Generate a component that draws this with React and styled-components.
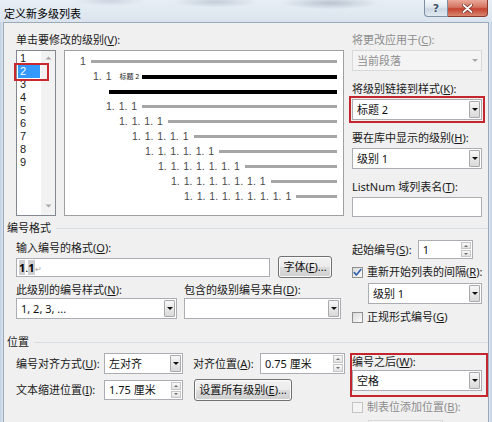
import React from "react";
import styled, { createGlobalStyle } from "styled-components";

const GlobalStyle = createGlobalStyle`
  html, body {
    margin: 0;
    padding: 0;
    background: #dae4ee;
  }
  body {
    font-family: "Noto Sans", "Noto Sans CJK SC", sans-serif;
    font-size: 11px;
    color: #1a1a1a;
  }
`;

const Window = styled.div`
  width: 492px;
  height: 422px;
  overflow: hidden;
  display: flex;
  flex-direction: column;
  background: linear-gradient(
    to right,
    #bfd0e2,
    #dde6ef 3px,
    #dde6ef calc(100% - 3px),
    #bfd0e2
  );
`;

const TitleBar = styled.div`
  flex: none;
  height: 22px;
  display: flex;
  align-items: flex-start;
  background:
    radial-gradient(ellipse 70px 9px at 330px 3px, rgba(105, 120, 138, 0.35), transparent 70%),
    radial-gradient(ellipse 60px 8px at 215px 2px, rgba(115, 130, 148, 0.3), transparent 70%),
    radial-gradient(ellipse 50px 7px at 110px 1px, rgba(125, 140, 158, 0.25), transparent 70%),
    linear-gradient(#e7eef5, #dbe4ee);
`;

const Title = styled.div`
  padding: 6px 0 0 4px;
  font-size: 11px;
  line-height: 16px;
  color: #000;
`;

const CaptionButtons = styled.div`
  margin-left: auto;
  margin-right: 4px;
  display: flex;
`;

const CaptionButton = styled.div`
  width: ${(p) => (p.$close ? 40 : 24)}px;
  height: 17px;
  box-sizing: border-box;
  border: 1px solid ${(p) => (p.$close ? "#8d3b2f" : "#7e8fa4")};
  border-top: none;
  border-left-width: ${(p) => (p.$close ? 0 : 1)}px;
  border-radius: ${(p) => (p.$close ? "0 0 4px 0" : "0 0 0 4px")};
  background: ${(p) =>
    p.$close
      ? "linear-gradient(#eaa99b, #d57461 45%, #c4432f 55%, #d98670)"
      : "linear-gradient(#f4f7fa, #dfe7ef 45%, #cbd6e2 55%, #e1e8f0)"};
  display: flex;
  align-items: center;
  justify-content: center;
  color: #41526a;
  font-family: "DejaVu Sans", sans-serif;
  font-weight: bold;
  font-size: 11px;
  text-shadow: 0 0 2px #fff;
`;

const Client = styled.div`
  flex: 1;
  margin: 0 3px;
  border: 1px solid #9aaabb;
  border-bottom: none;
  background: #f0f0f0;
  display: flex;
  flex-direction: column;
`;

const Section = styled.div`
  display: flex;
  align-items: flex-start;
  padding: ${(p) => p.$pt || 0}px 0 0 12px;
`;

const Column = styled.div`
  flex: none;
  width: ${(p) => p.$w}px;
  margin-left: ${(p) => p.$ml || 0}px;
  margin-top: ${(p) => p.$mt || 0}px;
  display: flex;
  flex-direction: column;
`;

const Label = styled.div`
  font-size: 11px;
  line-height: 14px;
  height: 14px;
  white-space: nowrap;
  color: ${(p) => (p.$disabled ? "#8d8d8d" : "#1a1a1a")};
  padding-left: ${(p) => p.$pl || 0}px;

  u {
    text-underline-offset: 1px;
  }
`;

const Field = styled.div`
  display: flex;
  flex-direction: column;
  gap: 3px;
  margin-bottom: ${(p) => p.$mb ?? 11}px;
`;

const ComboBox = styled.div`
  flex: none;
  display: flex;
  width: ${(p) => (p.$w ? `${p.$w}px` : "auto")};
  height: ${(p) => p.$h || 21}px;
  margin-left: ${(p) => p.$ml || 0}px;
  margin-top: ${(p) => p.$mt || 0}px;
  box-sizing: border-box;
  border: 1px solid ${(p) => (p.$disabled ? "#d9d9d9" : "#abadb3")};
  background: ${(p) => (p.$disabled ? "#f4f4f4" : "#fff")};
  outline: ${(p) => (p.$marked ? "2.5px solid #c3272d" : "none")};
  outline-offset: 1px;
`;

const FieldText = styled.div`
  flex: 1;
  padding-left: 4px;
  font-size: 11px;
  line-height: ${(p) => (p.$lh ? p.$lh : 19)}px;
  white-space: nowrap;
  overflow: hidden;
  color: ${(p) => (p.$disabled ? "#8d8d8d" : "#111")};
`;

const ComboArrow = styled.div`
  flex: none;
  width: 11px;
  margin: 1px;
  box-sizing: border-box;
  border: 1px solid ${(p) => (p.$disabled ? "transparent" : "#a9a9a9")};
  border-radius: 1px;
  background: ${(p) =>
    p.$disabled ? "transparent" : "linear-gradient(#f7f7f7, #d9d9d9)"};
  display: flex;
  align-items: center;
  justify-content: center;

  &::after {
    content: "";
    border-left: 3px solid transparent;
    border-right: 3px solid transparent;
    border-top: 3px solid ${(p) => (p.$disabled ? "#a8a8a8" : "#111")};
  }
`;

const SpinButtons = styled.div`
  flex: none;
  width: 10px;
  margin: 1px;
  display: flex;
  flex-direction: column;
  gap: 1px;
`;

const SpinHalf = styled.div`
  flex: 1;
  box-sizing: border-box;
  border: 1px solid #c6c6c6;
  background: linear-gradient(#f8f8f8, #e2e2e2);
  display: flex;
  align-items: center;
  justify-content: center;

  &::after {
    content: "";
    border-left: 2px solid transparent;
    border-right: 2px solid transparent;
    ${(p) => (p.$up ? "border-bottom" : "border-top")}: 2px solid #6f6f6f;
  }
`;

const LevelList = styled.div`
  position: relative;
  flex: none;
  width: 40px;
  height: 166px;
  box-sizing: border-box;
  border: 1px solid #828790;
  background: #fff;
  display: flex;
`;

const LevelItems = styled.div`
  flex: 1;
  padding-top: 1px;
`;

const LevelItem = styled.div`
  height: 13px;
  line-height: 13px;
  font-family: "Liberation Sans", sans-serif;
  font-size: 11px;
  margin: 0 1px;
  padding-left: 2px;
  background: ${(p) => (p.$selected ? "#3399ff" : "transparent")};
  color: ${(p) => (p.$selected ? "#fff" : "#1a1a1a")};
`;

const ScrollTrack = styled.div`
  flex: none;
  width: 14px;
  background: #f2f2f2;
  display: flex;
  flex-direction: column;
  justify-content: space-between;
  align-items: center;
  padding: 5px 0 7px;
  box-sizing: border-box;
`;

const ListMark = styled.div`
  position: absolute;
  left: -3px;
  top: 12px;
  width: 35px;
  height: 18px;
  box-sizing: border-box;
  border: 2.5px solid #c8282e;
  pointer-events: none;
`;

const Preview = styled.div`
  flex: none;
  width: 280px;
  height: 166px;
  box-sizing: border-box;
  border: 1px solid #a0a0a0;
  background: #fff;
  padding: 3px 6px 0 0;
`;

const PreviewRow = styled.div`
  height: 15px;
  display: flex;
  align-items: center;
  padding-left: ${(p) => p.$indent}px;
`;

const LevelNumber = styled.span`
  font-family: "Liberation Sans", sans-serif;
  font-size: 10.5px;
  line-height: 15px;
  color: #4a4a4a;
  word-spacing: 1px;
  white-space: pre;
`;

const StyleTag = styled.span`
  font-size: 7px;
  line-height: 15px;
  margin-left: 8px;
  color: #222;
  white-space: nowrap;
`;

const Bar = styled.div`
  flex: 1;
  height: ${(p) => (p.$dark ? 4 : 3)}px;
  margin-left: ${(p) => (p.$gap ?? 5)}px;
  background: ${(p) => (p.$dark ? "#000" : "#a6a6a6")};
`;

const SectionHeader = styled.div`
  display: flex;
  align-items: center;
  height: 14px;
  margin-top: ${(p) => p.$mt}px;
  padding-left: 3px;
  font-size: 11px;
  line-height: 14px;

  &::after {
    content: "";
    flex: 1;
    height: 1px;
    margin-left: 5px;
    background: #d8dde2;
  }
`;

const Row = styled.div`
  display: flex;
  align-items: center;
  gap: ${(p) => p.$gap || 0}px;
  margin-top: ${(p) => p.$mt || 0}px;
`;

const LabelPair = styled.div`
  display: grid;
  grid-template-columns: 168px auto;
  margin-top: 5px;
`;

const FormatInput = styled.div`
  flex: none;
  width: 254px;
  height: 19px;
  box-sizing: border-box;
  border: 1px solid #abadb3;
  background: #fff;
  padding-left: 2px;
  font-size: 11px;
  line-height: 17px;
  color: #000;
`;

const Shade = styled.span`
  background: #cfcfcf;
  font-weight: bold;
`;

const ReturnMark = styled.span`
  color: #a0a0a0;
  font-size: 8px;
`;

const PushButton = styled.div`
  flex: none;
  width: ${(p) => p.$w}px;
  height: 22px;
  margin-left: ${(p) => p.$ml || 0}px;
  box-sizing: border-box;
  border: 1px solid #707070;
  border-radius: 3px;
  background: linear-gradient(#f2f2f2, #ebebeb 50%, #dddddd 50%, #cfcfcf);
  box-shadow: inset 0 0 0 1px #fbfbfb;
  font-size: 11px;
  line-height: 20px;
  text-align: center;
  white-space: nowrap;
  color: #111;
`;

const CheckRow = styled.div`
  display: flex;
  align-items: center;
  gap: 4px;
  height: 14px;
  margin-top: ${(p) => p.$mt || 0}px;
`;

const CheckBox = styled.span`
  flex: none;
  width: 11px;
  height: 11px;
  box-sizing: border-box;
  border: 1px solid ${(p) => (p.$disabled ? "#c4c4c4" : "#8f8f8f")};
  background: ${(p) =>
    p.$disabled ? "#f4f4f4" : "linear-gradient(135deg, #dadada, #fbfbfb)"};
  display: flex;
  align-items: center;
  justify-content: center;
`;

const PositionGrid = styled.div`
  display: grid;
  grid-template-columns: 88px 80px 76px 85px;
  row-gap: 5px;
  align-items: center;
  margin-top: 4px;
`;

const WideCell = styled.div`
  grid-column: span 2;
`;

const MarkedGroup = styled.div`
  display: flex;
  flex-direction: column;
  gap: 1px;
  margin-right: -4px;
  padding: 0 4px 4px 0;
  outline: 2.5px solid #c3272d;
`;

const Acc = ({ text, k, colon = true }) => (
  <>
    {text}(<u>{k}</u>){colon ? ":" : ""}
  </>
);

const Combo = ({ value = "", w, h, disabled, marked, ml, mt }) => (
  <ComboBox $w={w} $h={h} $disabled={disabled} $marked={marked} $ml={ml} $mt={mt}>
    <FieldText $disabled={disabled} $lh={(h || 21) - 2}>
      {value}
    </FieldText>
    <ComboArrow $disabled={disabled} />
  </ComboBox>
);

const Spin = ({ value = "", w, h = 20, disabled, ml, mt }) => (
  <ComboBox $w={w} $h={h} $disabled={disabled} $ml={ml} $mt={mt}>
    <FieldText $disabled={disabled} $lh={h - 2}>
      {value}
    </FieldText>
    <SpinButtons>
      <SpinHalf $up />
      <SpinHalf />
    </SpinButtons>
  </ComboBox>
);

const Check = ({ checked, disabled }) => (
  <CheckBox $disabled={disabled}>
    {checked && (
      <svg width="9" height="9" viewBox="0 0 9 9">
        <path
          d="M1.3 4.6 L3.4 7 L7.8 1.6"
          fill="none"
          stroke="#2f5fa8"
          strokeWidth="1.6"
          strokeLinecap="round"
          strokeLinejoin="round"
        />
      </svg>
    )}
  </CheckBox>
);

const ScrollArrow = ({ up }) => (
  <svg width="7" height="4" viewBox="0 0 7 4">
    <path d={up ? "M0.5 3.5 L3.5 0.5 L6.5 3.5" : "M0.5 0.5 L3.5 3.5 L6.5 0.5"} fill="#a8a8a8" />
  </svg>
);

const levels = [1, 2, 3, 4, 5, 6, 7, 8, 9];

const numberFor = (n) => Array(n).fill("1").join(". ");

const App = () => (
  <>
    <GlobalStyle />
    <Window>
      <TitleBar>
        <Title>定义新多级列表</Title>
        <CaptionButtons>
          <CaptionButton>?</CaptionButton>
          <CaptionButton $close>
            <svg width="11" height="9" viewBox="0 0 11 9">
              <path
                d="M1.5 1 L9.5 8 M9.5 1 L1.5 8"
                stroke="#6b2a20"
                strokeWidth="3.2"
                strokeLinecap="round"
              />
              <path
                d="M1.5 1 L9.5 8 M9.5 1 L1.5 8"
                stroke="#fff"
                strokeWidth="1.8"
                strokeLinecap="round"
              />
            </svg>
          </CaptionButton>
        </CaptionButtons>
      </TitleBar>

      <Client>
        <Section $pt={10}>
          <Column $w={328}>
            <Label>
              <Acc text="单击要修改的级别" k="V" />
            </Label>
            <Row $gap={8} $mt={3}>
              <LevelList>
                <LevelItems>
                  {levels.map((n) => (
                    <LevelItem key={n} $selected={n === 2}>
                      {n}
                    </LevelItem>
                  ))}
                </LevelItems>
                <ScrollTrack>
                  <ScrollArrow up />
                  <ScrollArrow />
                </ScrollTrack>
                <ListMark />
              </LevelList>
              <Preview>
                <PreviewRow $indent={15}>
                  <LevelNumber>1</LevelNumber>
                  <Bar />
                </PreviewRow>
                <PreviewRow $indent={28}>
                  <LevelNumber>1. 1</LevelNumber>
                  <StyleTag>标题 2</StyleTag>
                  <Bar $dark $gap={3} />
                </PreviewRow>
                <PreviewRow $indent={44}>
                  <Bar $dark $gap={0} />
                </PreviewRow>
                {levels.slice(2).map((n) => (
                  <PreviewRow key={n} $indent={15 + 13 * (n - 1)}>
                    <LevelNumber>{numberFor(n)}</LevelNumber>
                    <Bar />
                  </PreviewRow>
                ))}
              </Preview>
            </Row>
          </Column>

          <Column $w={130} $ml={8}>
            <Field>
              <Label $disabled>
                <Acc text="将更改应用于" k="C" />
              </Label>
              <Combo value="当前段落" disabled />
            </Field>
            <Field>
              <Label>
                <Acc text="将级别链接到样式" k="K" />
              </Label>
              <Combo value="标题 2" marked />
            </Field>
            <Field>
              <Label>
                <Acc text="要在库中显示的级别" k="H" />
              </Label>
              <Combo value="级别 1" />
            </Field>
            <Field $mb={0}>
              <Label>
                <Acc text="ListNum 域列表名" k="T" />
              </Label>
              <ComboBox $h={20} />
            </Field>
          </Column>
        </Section>

        <SectionHeader $mt={4}>编号格式</SectionHeader>

        <Section>
          <Column $w={325} $mt={6}>
            <Label>
              <Acc text="输入编号的格式" k="O" />
            </Label>
            <Row $gap={8} $mt={1}>
              <FormatInput>
                <Shade>1</Shade>.<Shade>1</Shade>
                <ReturnMark>↵</ReturnMark>
              </FormatInput>
              <PushButton $w={54}>
                <Acc text="字体" k="F" colon={false} />
                ...
              </PushButton>
            </Row>
            <LabelPair>
              <Label>
                <Acc text="此级别的编号样式" k="N" />
              </Label>
              <Label>
                <Acc text="包含的级别编号来自" k="D" />
              </Label>
            </LabelPair>
            <Row $gap={7} $mt={1}>
              <Combo value="1, 2, 3, ..." w={161} />
              <Combo w={157} />
            </Row>
          </Column>

          <Column $w={130} $ml={11} $mt={5}>
            <Row $gap={6}>
              <Label>
                <Acc text="起始编号" k="S" />
              </Label>
              <Spin value="1" w={55} h={19} />
            </Row>
            <CheckRow $mt={6}>
              <Check checked />
              <Label>
                <Acc text="重新开始列表的间隔" k="R" />
              </Label>
            </CheckRow>
            <Combo value="级别 1" w={114} ml={16} mt={4} />
            <CheckRow $mt={6}>
              <Check />
              <Label>
                <Acc text="正规形式编号" k="G" colon={false} />
              </Label>
            </CheckRow>
          </Column>
        </Section>

        <SectionHeader $mt={11}>位置</SectionHeader>

        <Section>
          <Column $w={329}>
            <PositionGrid>
              <Label>
                <Acc text="编号对齐方式" k="U" />
              </Label>
              <Combo value="左对齐" w={79} />
              <Label $pl={9}>
                <Acc text="对齐位置" k="A" />
              </Label>
              <Spin value="0.75 厘米" w={85} h={21} />

              <Label>
                <Acc text="文本缩进位置" k="I" />
              </Label>
              <Spin value="1.75 厘米" w={79} />
              <WideCell>
                <PushButton $w={98} $ml={10}>
                  <Acc text="设置所有级别" k="E" colon={false} />
                  ...
                </PushButton>
              </WideCell>
            </PositionGrid>
          </Column>

          <Column $w={130} $ml={7} $mt={6}>
            <MarkedGroup>
              <Label>
                <Acc text="编号之后" k="W" />
              </Label>
              <Combo value="空格" />
            </MarkedGroup>
            <CheckRow $mt={5}>
              <Check disabled />
              <Label $disabled>
                <Acc text="制表位添加位置" k="B" />
              </Label>
            </CheckRow>
            <Spin value="" w={75} ml={16} mt={6} disabled />
          </Column>
        </Section>
      </Client>
    </Window>
  </>
);

export default App;
